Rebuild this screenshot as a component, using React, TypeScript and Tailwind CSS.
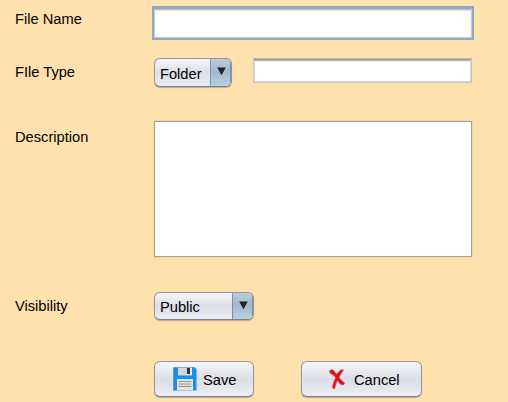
import type { ReactNode } from "react";

function Row({ label, className, children }: { label?: string; className: string; children: ReactNode }) {
  return (
    <div className={`flex shrink-0 items-start ${className}`}>
      <label className="w-[139px] shrink-0 leading-[18px]">{label}</label>
      {children}
    </div>
  );
}

const raised =
  "rounded-[6px] border border-[#93959c] border-b-[#7d8088] bg-linear-to-b from-[#f7f7fa] via-[#dcdee5] to-[#ebedf4] shadow-[0_1px_1px_#b5ab98]";

function Combo({ value, className }: { value: string; className: string }) {
  return (
    <button className={`flex items-stretch overflow-hidden text-left ${raised} ${className}`}>
      <span className="flex-1 pl-[5px] leading-[18px]">{value}</span>
      <span className="flex w-[21px] items-start justify-center border-l border-[#7c93a9] bg-linear-to-b from-[#bccbd8] via-[#a3b8cb] to-[#bad1e4] pt-[8px] shadow-[inset_-1px_0_0_#7891a6]">
        <svg width="9" height="9" viewBox="0 0 9 9" fill="#20242a">
          <path d="M.2.5h8.6L4.5 8.3z" />
        </svg>
      </span>
    </button>
  );
}

function SaveIcon() {
  return (
    <svg width="24" height="24" viewBox="0 0 24 24">
      <path d="M.5.5h21.3L23.5 2v21.5H.5z" fill="#1292f2" />
      <path d="M.5.5h21.3v1H1.5v22h-1z" fill="#4a7698" />
      <path d="M5 .7h14V8.5H5z" fill="#d3d7d8" />
      <path d="M14 1h3.2v6H14z" fill="#33383b" />
      <path d="M17.2 1H19v6h-1.8z" fill="#f1f1ef" />
      <path d="M4 12h16v11.3H4z" fill="#e4e3e0" />
      <path d="M5.5 14.5h13M5.5 17h13M5.5 19.5h13" stroke="#949696" strokeWidth="1.2" />
    </svg>
  );
}

function CancelIcon() {
  return (
    <svg width="17" height="21" viewBox="0 0 17 21">
      <path
        d="M.8 1.4 3.8.8c1.5 1.5 2.5 3.2 3.7 4.7C9 3.7 10.5 1.9 12.2.8l2.2.3c-1.6 2.3-3.3 4.7-4.5 7.2 1.5 2.3 3.3 4.1 5.6 5.7l-.8 1.6-2.5-.1c-1.6-1.2-2.9-2.6-4-4.2-1.2 2.7-1.9 5.4-2.8 8.4l-1.1-.1-.7-2.2c.6-3 1.7-5.9 3.1-8.7C5.3 6.8 4 5.1 1 4z"
        fill="#eb0d14"
        stroke="#d2232b"
        strokeWidth=".6"
      />
    </svg>
  );
}

export default function App() {
  return (
    <main className="flex h-[402px] w-[508px] flex-col overflow-hidden bg-[#ffe1ae] pt-[6px] pl-[15px] font-['Liberation_Sans',Arial,sans-serif] text-[14.67px] text-black">
      <Row label="File Name" className="h-[52px] [&>label]:pt-[4px]">
        <input
          aria-label="File name"
          className="-ml-[2px] h-[34px] w-[322px] border-2 border-[#86acca] bg-white px-1 shadow-[inset_0_1px_0_#a4a8ae,inset_0_2px_0_#c3c4c8,inset_0_3px_0_#e2e2e5,inset_1px_0_1px_#c3c8cd,inset_-1px_-1px_1px_#c3c8cd] outline-none"
        />
      </Row>
      <Row label="FIle Type" className="h-[62px] [&>label]:pt-[5px]">
        <Combo value="Folder" className="h-[29px] w-[78px] [&>span:first-child]:pt-[6px]" />
        <input
          aria-label="File type"
          className="ml-[21px] h-[25px] w-[219px] border border-[#cbc5ba] border-t-[#c1b8a9] bg-white px-1 shadow-[inset_0_1px_0_#9c9ca1,inset_0_2px_0_#b9b9bd,inset_0_3px_0_#e6e6e9,inset_1px_0_0_#dadce1,inset_-1px_-1px_0_#d4d5d9] outline-none"
        />
      </Row>
      <Row label="Description" className="h-[172px] [&>label]:pt-[8px]">
        <textarea
          aria-label="Description"
          className="mt-[1px] h-[136px] w-[318px] resize-none border border-[#a39d92] bg-white p-1 shadow-[0_0_1px_#a99f8f] outline-none"
        />
      </Row>
      <Row label="Visibility" className="h-[69px] [&>label]:pt-[5px]">
        <Combo value="Public" className="h-[28px] w-[100px] [&>span:first-child]:pt-[5px]" />
      </Row>
      <div className="flex gap-[47px] pl-[139px]">
        <button className={`flex h-[36px] w-[100px] items-center pl-[18px] ${raised}`}>
          <SaveIcon />
          <span className="ml-[6px] pt-[2px] leading-[18px]">Save</span>
        </button>
        <button className={`flex h-[36px] w-[121px] items-center pl-[27px] ${raised}`}>
          <CancelIcon />
          <span className="ml-[8px] pt-[2px] leading-[18px]">Cancel</span>
        </button>
      </div>
    </main>
  );
}
